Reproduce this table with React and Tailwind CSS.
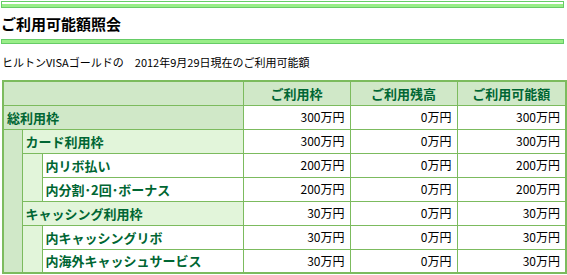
import React from 'react';

const rows = [
  { label: '総利用枠', level: 0, limit: '300万円', used: '0万円', avail: '300万円' },
  { label: 'カード利用枠', level: 1, limit: '300万円', used: '0万円', avail: '300万円' },
  { label: '内リボ払い', level: 2, limit: '200万円', used: '0万円', avail: '200万円' },
  { label: '内分割･2回･ボーナス', level: 2, limit: '200万円', used: '0万円', avail: '200万円' },
  { label: 'キャッシング利用枠', level: 1, limit: '30万円', used: '0万円', avail: '30万円' },
  { label: '内キャッシングリボ', level: 2, limit: '30万円', used: '0万円', avail: '30万円' },
  { label: '内海外キャッシュサービス', level: 2, limit: '30万円', used: '0万円', avail: '30万円' },
];

const cell = 'border border-[#7cbb5e] h-[24px] p-0';
const labelCls = 'text-[13px] font-bold text-[#006633] pl-[3px] text-left';
const numCls = 'text-[12px] text-black text-right pr-[5px]';
const headCls = 'text-[13px] font-bold text-[#006633] text-center bg-[#d0e8c8]';

const App = () => {
  return (
    <div className="w-[567px] h-[275px] bg-white overflow-hidden font-['Noto_Sans_CJK_JP',sans-serif]">
      {/* header bars */}
      <div className="ml-[1px] mt-[1px] w-[563px] h-[7px] border border-[#66cc66] flex flex-col">
        <div className="h-[2px] bg-white" />
        <div className="flex-1 bg-[#99ee88]" />
      </div>
      <div className="h-[31px] flex items-center pl-[1px] text-[15px] font-bold text-black leading-none">
        ご利用可能額照会
      </div>
      <div className="ml-[1px] w-[563px] h-[5px] border border-[#66cc66] bg-[#99ee88]" />

      <div className="h-[36px] flex items-center pl-[2px] text-[11px] text-black leading-none">
        ヒルトンVISAゴールドの　2012年9月29日現在のご利用可能額
      </div>

      {/* table */}
      <table className="ml-[2px] w-[563px] table-fixed border-collapse border-2 border-[#7cbb5e] leading-none">
        <colgroup>
          <col className="w-[19px]" />
          <col className="w-[20px]" />
          <col className="w-[201px]" />
          <col className="w-[107px]" />
          <col className="w-[107px]" />
          <col className="w-[109px]" />
        </colgroup>
        <tbody>
          <tr>
            <td colSpan={3} className={`${cell} bg-[#d0e8c8]`} />
            <th className={`${cell} ${headCls}`}>ご利用枠</th>
            <th className={`${cell} ${headCls}`}>ご利用残高</th>
            <th className={`${cell} ${headCls}`}>ご利用可能額</th>
          </tr>
          {rows.map((r, i) => (
            <tr key={r.label}>
              {i === 1 && <td rowSpan={6} className={`${cell} bg-[#d0e8c8]`} />}
              {(i === 2 || i === 5) && <td rowSpan={2} className={`${cell} bg-[#e2f5da]`} />}
              {r.level === 0 && (
                <td colSpan={3} className={`${cell} ${labelCls} bg-[#d0e8c8]`}>{r.label}</td>
              )}
              {r.level === 1 && (
                <td colSpan={2} className={`${cell} ${labelCls} bg-[#e2f5da]`}>{r.label}</td>
              )}
              {r.level === 2 && (
                <td className={`${cell} ${labelCls} bg-white`}>{r.label}</td>
              )}
              <td className={`${cell} ${numCls}`}>{r.limit}</td>
              <td className={`${cell} ${numCls}`}>{r.used}</td>
              <td className={`${cell} ${numCls}`}>{r.avail}</td>
            </tr>
          ))}
        </tbody>
      </table>
    </div>
  );
};

export default App;
